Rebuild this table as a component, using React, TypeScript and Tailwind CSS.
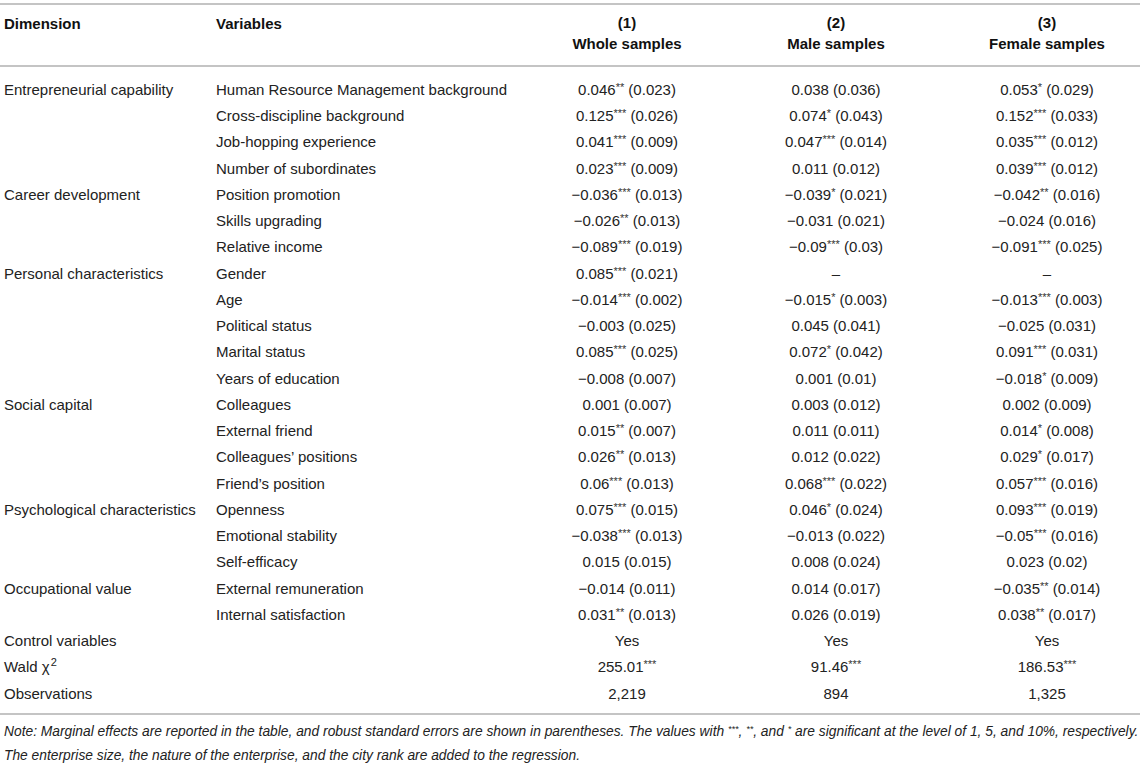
import React from 'react'

type Cell = string

interface Row {
  dim?: string
  variable?: string
  values: [Cell, Cell, Cell]
}

const rows: Row[] = [
  { dim: 'Entrepreneurial capability', variable: 'Human Resource Management background', values: ['0.046** (0.023)', '0.038 (0.036)', '0.053* (0.029)'] },
  { variable: 'Cross-discipline background', values: ['0.125*** (0.026)', '0.074* (0.043)', '0.152*** (0.033)'] },
  { variable: 'Job-hopping experience', values: ['0.041*** (0.009)', '0.047*** (0.014)', '0.035*** (0.012)'] },
  { variable: 'Number of subordinates', values: ['0.023*** (0.009)', '0.011 (0.012)', '0.039*** (0.012)'] },
  { dim: 'Career development', variable: 'Position promotion', values: ['−0.036*** (0.013)', '−0.039* (0.021)', '−0.042** (0.016)'] },
  { variable: 'Skills upgrading', values: ['−0.026** (0.013)', '−0.031 (0.021)', '−0.024 (0.016)'] },
  { variable: 'Relative income', values: ['−0.089*** (0.019)', '−0.09*** (0.03)', '−0.091*** (0.025)'] },
  { dim: 'Personal characteristics', variable: 'Gender', values: ['0.085*** (0.021)', '–', '–'] },
  { variable: 'Age', values: ['−0.014*** (0.002)', '−0.015* (0.003)', '−0.013*** (0.003)'] },
  { variable: 'Political status', values: ['−0.003 (0.025)', '0.045 (0.041)', '−0.025 (0.031)'] },
  { variable: 'Marital status', values: ['0.085*** (0.025)', '0.072* (0.042)', '0.091*** (0.031)'] },
  { variable: 'Years of education', values: ['−0.008 (0.007)', '0.001 (0.01)', '−0.018* (0.009)'] },
  { dim: 'Social capital', variable: 'Colleagues', values: ['0.001 (0.007)', '0.003 (0.012)', '0.002 (0.009)'] },
  { variable: 'External friend', values: ['0.015** (0.007)', '0.011 (0.011)', '0.014* (0.008)'] },
  { variable: 'Colleagues’ positions', values: ['0.026** (0.013)', '0.012 (0.022)', '0.029* (0.017)'] },
  { variable: 'Friend’s position', values: ['0.06*** (0.013)', '0.068*** (0.022)', '0.057*** (0.016)'] },
  { dim: 'Psychological characteristics', variable: 'Openness', values: ['0.075*** (0.015)', '0.046* (0.024)', '0.093*** (0.019)'] },
  { variable: 'Emotional stability', values: ['−0.038*** (0.013)', '−0.013 (0.022)', '−0.05*** (0.016)'] },
  { variable: 'Self-efficacy', values: ['0.015 (0.015)', '0.008 (0.024)', '0.023 (0.02)'] },
  { dim: 'Occupational value', variable: 'External remuneration', values: ['−0.014 (0.011)', '0.014 (0.017)', '−0.035** (0.014)'] },
  { variable: 'Internal satisfaction', values: ['0.031** (0.013)', '0.026 (0.019)', '0.038** (0.017)'] },
  { dim: 'Control variables', values: ['Yes', 'Yes', 'Yes'] },
  { dim: 'Wald', values: ['255.01***', '91.46***', '186.53***'] },
  { dim: 'Observations', values: ['2,219', '894', '1,325'] },
]

// split "0.046** (0.023)" into number, stars, rest
function Value({ text }: { text: string }) {
  const m = text.match(/^([^*]*?)(\*+)(.*)$/)
  if (!m) return <span>{text}</span>
  return (
    <span>
      {m[1]}
      <sup className="text-[11px] relative -top-[4px] text-[#333]">{m[2]}</sup>
      {m[3]}
    </span>
  )
}

export default function App() {
  const cols = 'grid grid-cols-[216px_306px_210px_208px_1fr]'

  return (
    <div
      className="w-[1140px] bg-white text-[15px] text-[#222]"
      style={{ fontFamily: '"Liberation Sans", Arial, Helvetica, sans-serif' }}
    >
      <div className="h-[3px]" />
      {/* Header */}
      <div className={`${cols} border-t-2 border-b-2 border-[#c4c4c4] pt-[7px] pb-[11px] font-bold text-[#111] leading-[21px]`}>
        <div className="pl-[4px] pt-[1px]">Dimension</div>
        <div className="pt-[1px]">Variables</div>
        <div className="text-center">
          <div>(1)</div>
          <div>Whole samples</div>
        </div>
        <div className="text-center">
          <div>(2)</div>
          <div>Male samples</div>
        </div>
        <div className="text-center pl-[14px]">
          <div>(3)</div>
          <div>Female samples</div>
        </div>
      </div>

      {/* Body */}
      <div className="pt-[10px] pb-[6px] border-b-2 border-[#c4c4c4]">
        {rows.map((r, i) => (
          <div key={i} className={`${cols} h-[26.25px] items-center`}>
            <div className="pl-[4px] whitespace-nowrap">
              {r.dim === 'Wald' ? (
                <span>
                  Wald χ<sup className="text-[11px] relative -top-[6px] ml-[1px]">2</sup>
                </span>
              ) : (
                r.dim
              )}
            </div>
            <div className="whitespace-nowrap">{r.variable}</div>
            <div className="text-center whitespace-nowrap">
              <Value text={r.values[0]} />
            </div>
            <div className="text-center whitespace-nowrap">
              <Value text={r.values[1]} />
            </div>
            <div className="text-center whitespace-nowrap pl-[14px]">
              <Value text={r.values[2]} />
            </div>
          </div>
        ))}
      </div>

      {/* Note */}
      <div className="pl-[4px] pt-[5px] italic text-[13.8px] leading-[24px] text-[#222]">
        <p className="whitespace-nowrap">
          Note: Marginal effects are reported in the table, and robust standard errors are shown in parentheses. The values with{' '}
          <sup className="text-[9px]">***</sup>, <sup className="text-[9px]">**</sup>, and <sup className="text-[9px]">*</sup> are significant at the level of 1, 5, and 10%, respectively.
        </p>
        <p>The enterprise size, the nature of the enterprise, and the city rank are added to the regression.</p>
      </div>
    </div>
  )
}
